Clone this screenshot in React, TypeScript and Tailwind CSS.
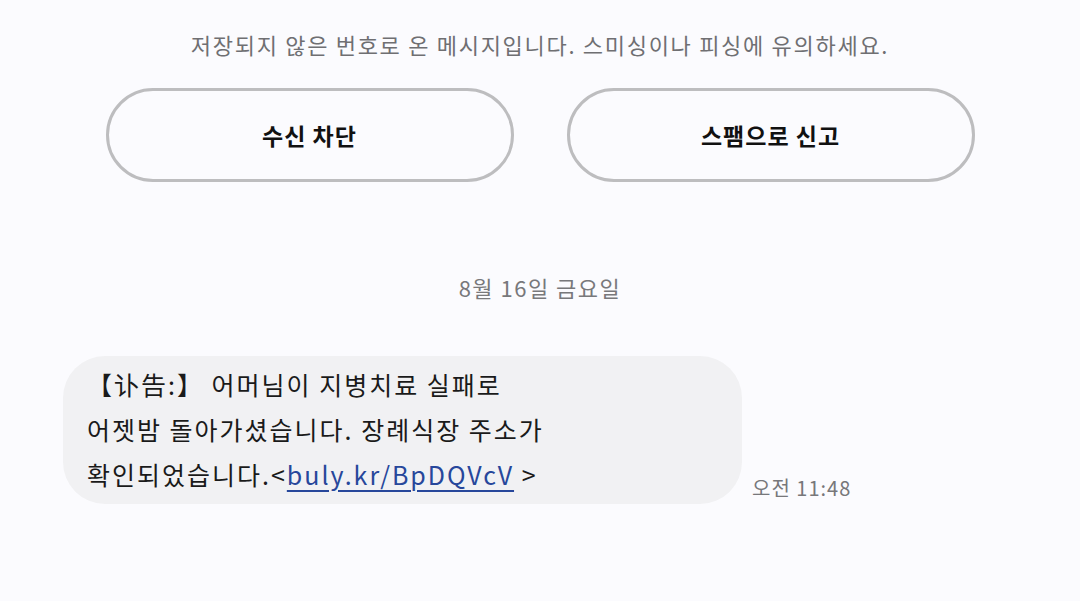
import React from "react";

const font = { fontFamily: '"Noto Sans CJK KR", "Noto Sans", sans-serif' };

function ActionButton({ label }: { label: string }) {
  return (
    <button
      type="button"
      className="flex h-[94px] w-[408px] items-center justify-center rounded-full border-[3px] border-[#bdbdbf] bg-transparent text-[23px] font-bold tracking-[1px] text-[#111]"
    >
      {label}
    </button>
  );
}

export default function App() {
  return (
    <div className="flex h-[601px] w-[1080px] flex-col bg-[#fbfbfe]" style={font}>
      <p className="mt-[29px] text-center text-[22px] leading-[30px] tracking-[1.7px] text-[#6f6f72]">
        저장되지 않은 번호로 온 메시지입니다. 스미싱이나 피싱에 유의하세요.
      </p>

      <div className="mt-[29px] flex justify-center gap-[53px]">
        <ActionButton label="수신 차단" />
        <ActionButton label="스팸으로 신고" />
      </div>

      <p className="mt-[89px] text-center text-[22px] leading-[32px] tracking-[1.5px] text-[#78787b]">8월 16일 금요일</p>

      <div className="mt-[53px] flex items-end pl-[63px]">
        <div className="w-[679px] rounded-[42px] bg-[#f1f1f3] pb-[7px] pl-[24px] pt-[6px] text-[25px] leading-[45px] tracking-[2px] text-[#1a1a1a]">
          【讣告:】 어머님이 지병치료 실패로
          <br />
          어젯밤 돌아가셨습니다. 장례식장 주소가
          <br />
          확인되었습니다.&lt;
          <span className="text-[#27479b] underline decoration-[2px] underline-offset-[5px]">buly.kr/BpDQVcV</span>{" "}
          &gt;
        </div>
        <span className="mb-[2px] ml-[10px] text-[20px] leading-[28px] tracking-[1px] text-[#77777a]">오전 11:48</span>
      </div>
    </div>
  );
}
